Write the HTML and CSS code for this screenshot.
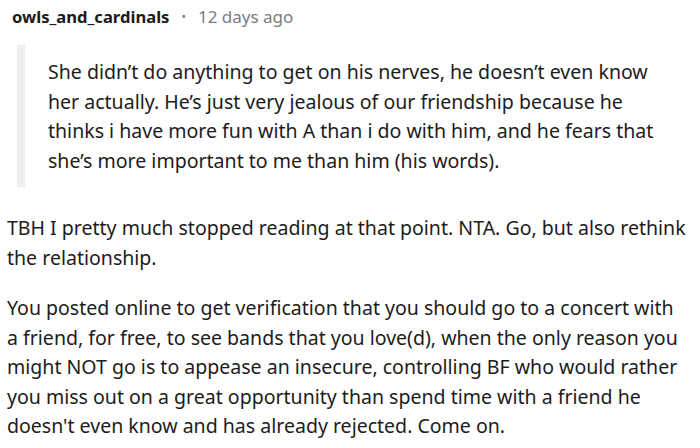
FILE: index.html
```html
<!DOCTYPE html>
<html>
<head>
<meta charset="utf-8">
<link rel="stylesheet" href="styles.css">
</head>
<body>
<div class="comment">
  <div class="meta">
    <span class="author">owls_and_cardinals</span>
    <span class="dot">•</span>
    <span class="time">12 days ago</span>
  </div>
  <div class="body">
    <blockquote class="quote">
      <p>She didn’t do anything to get on his nerves, he doesn’t even know her actually. He’s just very jealous of our friendship because he thinks i have more fun with A than i do with him, and he fears that she’s more important to me than him (his words).</p>
    </blockquote>
    <p class="para">TBH I pretty much stopped reading at that point. NTA. Go, but also rethink the relationship.</p>
    <p class="para">You posted online to get verification that you should go to a concert with a friend, for free, to see bands that you love(d), when the only reason you might NOT go is to appease an insecure, controlling BF who would rather you miss out on a great opportunity than spend time with a friend he doesn't even know and has already rejected. Come on.</p>
  </div>
</div>
</body>
</html>
```

FILE: styles.css
```css
html, body {
  margin: 0;
  padding: 0;
  background: #ffffff;
}
body {
  font-family: "Noto Sans", "Open Sans", sans-serif;
  color: #1c1c1c;
}
.comment {
  padding: 3px 12px 0 7px;
}
.meta {
  display: flex;
  align-items: center;
  gap: 12px;
  padding-left: 5px;
  height: 26px;
  font-size: 16.6px;
}
.author {
  font-weight: 700;
  color: #1a1a1b;
}
.dot {
  color: #7c7c7c;
  font-size: 12px;
}
.time {
  color: #7c7c7c;
  font-size: 17px;
}
.body {
  font-size: 19.55px;
  line-height: 29.5px;
}
.quote {
  margin: 16px 0 26px 10px;
  padding: 12px 20px 12px 23px;
  border-left: 8px solid #ededed;
}
.quote p {
  margin: 0;
}
.para {
  margin: 0 0 21px 0;
}
```
